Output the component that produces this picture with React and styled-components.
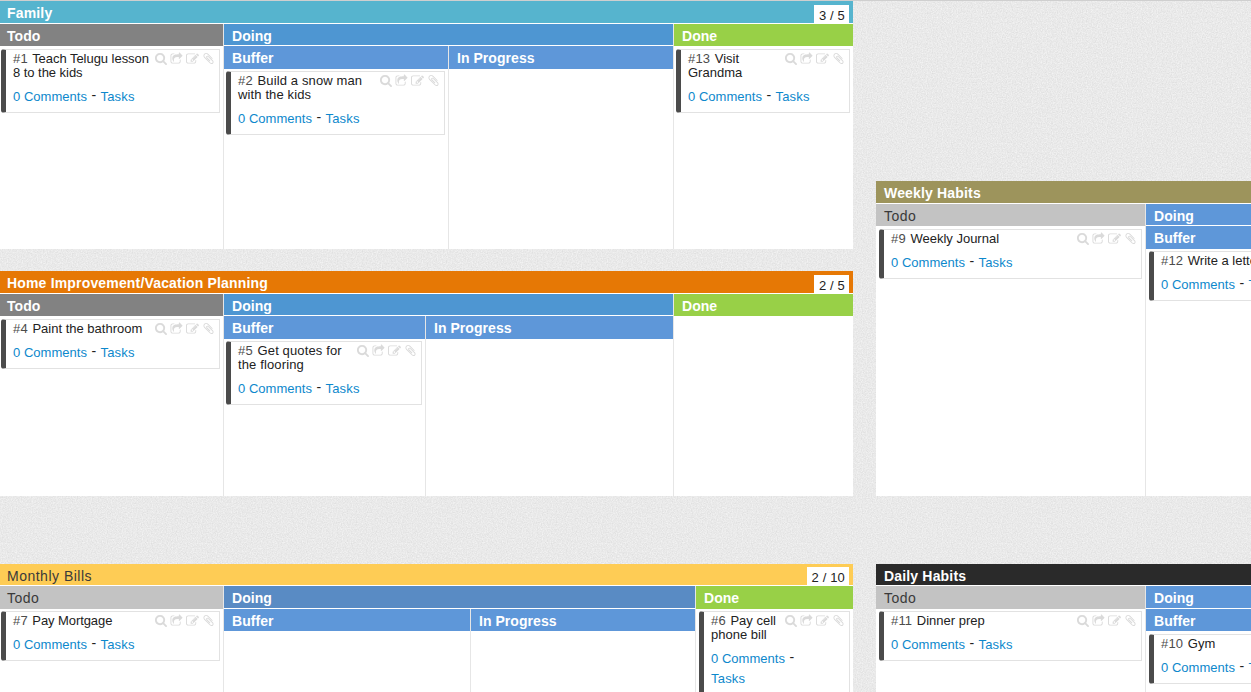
import React from "react";
import styled, { createGlobalStyle } from "styled-components";

const grain = encodeURIComponent(
  `<svg xmlns="http://www.w3.org/2000/svg" width="200" height="200"><filter id="n" x="0" y="0" width="100%" height="100%" color-interpolation-filters="sRGB"><feTurbulence type="fractalNoise" baseFrequency="0.8" numOctaves="2" seed="4" stitchTiles="stitch"/><feColorMatrix values="0.12 0 0 0 0.855  0.12 0 0 0 0.855  0.12 0 0 0 0.855  0 0 0 0 1"/></filter><rect width="200" height="200" filter="url(#n)"/></svg>`
);

const GlobalStyle = createGlobalStyle`
  *, *::before, *::after { box-sizing: border-box; }
  html, body { margin: 0; padding: 0; }
  body {
    overflow: hidden;
    font-family: "Liberation Sans", Arial, sans-serif;
    font-size: 13px;
    color: #222;
    background: #e9e9e9;
  }
`;

const Board = styled.main`
  display: flex;
  gap: 23px;
  width: 100vw;
  height: 692px;
  overflow: hidden;
  border-top: 1px solid #cfcfcf;
  background: #e9e9e9 url("data:image/svg+xml,${grain}");
`;

const Stack = styled.div`
  flex: none;
  display: flex;
  flex-direction: column;
  width: ${(p) => p.$width}px;
  padding-top: ${(p) => p.$offset || 0}px;
`;

const LaneBox = styled.section`
  flex: none;
  display: flex;
  flex-direction: column;
  height: ${(p) => p.$height}px;
  margin-bottom: ${(p) => p.$gap || 0}px;
  background: #fff;
`;

const LaneHeader = styled.header`
  flex: none;
  display: flex;
  justify-content: space-between;
  align-items: flex-start;
  height: ${(p) => p.$height}px;
  padding: 2px 4px 0 ${(p) => p.$indent}px;
  background: ${(p) => p.$bg};
`;

const Heading = styled.h2`
  margin: 0;
  font-size: 14px;
  line-height: 21px;
  font-weight: ${(p) => (p.$plain ? 400 : 700)};
  letter-spacing: ${(p) => (p.$plain ? 0.5 : 0.05)}px;
  color: ${(p) => (p.$plain ? "#3a3a3a" : "#fff")};
  white-space: nowrap;
`;

const LaneName = styled(Heading)`
  letter-spacing: ${(p) => (p.$plain ? 0.5 : 0.17)}px;
`;

const Count = styled.span`
  align-self: flex-end;
  height: 18px;
  padding: 0 4px 0 5px;
  font-size: 13px;
  line-height: 21px;
  letter-spacing: 0.15px;
  color: #222;
  background: #fff;
`;

const Columns = styled.div`
  flex: 1;
  display: flex;
  min-height: 0;
  padding-top: ${(p) => p.$top || 0}px;
`;

const ColumnBox = styled.div`
  display: flex;
  flex-direction: column;
  flex: ${(p) => (p.$width ? `0 0 ${p.$width}px` : "1")};
  min-width: 0;
  border-right: ${(p) => (p.$last ? "0" : "1px solid #e6e6e6")};
`;

const ColumnHeader = styled.div`
  flex: none;
  height: ${(p) => p.$height}px;
  padding: 2px 0 0 ${(p) => p.$indent}px;
  background: ${(p) => p.$bg};
  overflow: hidden;
`;

const CardBox = styled.article`
  flex: none;
  margin: ${(p) => p.$top}px 3px 0 ${(p) => p.$left}px;
  padding: 2px 4px 5px 7px;
  border: 1px solid #e2e2e2;
  border-left: 5px solid #4b4b4b;
  border-radius: 3px 0 0 3px;
  background: #fff;
`;

const CardTop = styled.div`
  display: flex;
  justify-content: space-between;
`;

const Title = styled.div`
  font-size: 13px;
  line-height: 14px;
  letter-spacing: ${(p) => p.$tracking}px;
  white-space: pre;
`;

const Num = styled.span`
  margin-right: 1px;
  letter-spacing: 0.15px;
  color: #4c4c4c;
`;

const Links = styled.div`
  margin-top: 7px;
  line-height: 20px;
  white-space: pre;
`;

const Link = styled.a`
  letter-spacing: ${(p) => p.$tracking || 0.03}px;
  color: #0d88cc;
`;

const Dash = styled.span`
  font-size: 14px;
  line-height: 0;
  vertical-align: 1px;
  word-spacing: 0.5px;
`;

const Tools = styled.div`
  flex: none;
  display: flex;
  gap: 3px;
  height: 14px;
`;

const Glyph = styled.svg`
  width: 13px;
  height: 13px;
  fill: #dadada;
`;

const paths = {
  search:
    "M1216 832q0-185-131.5-316.5t-316.5-131.5-316.5 131.5-131.5 316.5 131.5 316.5 316.5 131.5 316.5-131.5 131.5-316.5zm512 832q0 52-38 90t-90 38q-54 0-90-38l-343-342q-179 124-399 124-143 0-273.5-55.5t-225-150-150-225-55.5-273.5 55.5-273.5 150-225 225-150 273.5-55.5 273.5 55.5 225 150 150 225 55.5 273.5q0 220-124 399l343 343q37 37 37 90z",
  share:
    "M1472 989v259q0 119-84.5 203.5t-203.5 84.5h-832q-119 0-203.5-84.5t-84.5-203.5v-832q0-119 84.5-203.5t203.5-84.5h255q13 0 22.5 9.5t9.5 22.5q0 27-26 32-77 26-133 60-10 4-16 4h-112q-66 0-113 47t-47 113v832q0 66 47 113t113 47h832q66 0 113-47t47-113v-214q0-19 18-29 28-13 54-37 16-16 35-8 21 9 21 29zm237-496l-384 384q-18 19-45 19-12 0-25-5-39-17-39-59v-192h-160q-323 0-438 131-119 137-74 473 3 23-20 34-8 2-12 2-16 0-26-13-10-14-21-31t-39.5-68.5-49.5-99.5-38.5-114-17.5-122q0-49 3.5-91t14-90 28-88 47-81.5 68.5-74 94.5-61.5 124.5-48.5 159.5-30.5 196.5-11h160v-192q0-42 39-59 13-5 25-5 26 0 45 19l384 384q19 19 19 45t-19 45z",
  edit:
    "M888 1184l116-116-152-152-116 116v56h96v96h56zm440-720q-16-16-33 1l-350 350q-17 17-1 33t33-1l350-350q17-17 1-33zm80 594v190q0 119-84.5 203.5t-203.5 84.5h-832q-119 0-203.5-84.5t-84.5-203.5v-832q0-119 84.5-203.5t203.5-84.5h832q63 0 117 25 15 7 18 23 3 17-9 29l-49 49q-14 14-32 8-23-6-45-6h-832q-66 0-113 47t-47 113v832q0 66 47 113t113 47h832q66 0 113-47t47-113v-126q0-13 9-22l64-64q15-15 35-7t20 29zm-96-738l288 288-672 672h-288v-288zm444 132l-92 92-288-288 92-92q28-28 68-28t68 28l152 152q28 28 28 68t-28 68z",
  clip:
    "M1596 1385q0 117-79 196t-196 79q-135 0-235-100l-777-776q-113-115-113-271 0-159 110-270t269-111q158 0 273 113l605 606q10 10 10 22 0 16-30.5 46.5t-46.5 30.5q-13 0-23-10l-606-607q-79-77-181-77-106 0-179 75t-73 181q0 105 76 181l776 777q63 63 145 63 64 0 106-42t42-106q0-82-63-145l-581-581q-26-24-60-24-29 0-48 19t-19 48q0 32 25 59l410 410q10 10 10 22 0 16-31 47t-47 31q-12 0-22-10l-410-410q-63-61-63-149 0-82 57-139t139-57q88 0 149 63l581 581q100 98 100 235z",
};

const views = {
  search: "-64 0 1792 1792",
  share: "0 -64 1792 1792",
  edit: "0 -64 1792 1792",
  clip: "0 0 1792 1792",
};

const Card = ({ id, title, top = 3, left = 2, stacked, tracking = 0.13 }) => (
  <CardBox $top={top} $left={left}>
    <CardTop>
      <Title $tracking={tracking}>
        <Num>#{id}</Num> {title}
      </Title>
      <Tools>
        {Object.keys(paths).map((name) => (
          <Glyph key={name} viewBox={views[name]} aria-label={name}>
            <path d={paths[name]} />
          </Glyph>
        ))}
      </Tools>
    </CardTop>
    <Links>
      <Link>0 Comments</Link>
      <Dash>{stacked ? " -\n" : " - "}</Dash>
      <Link $tracking={0.2}>Tasks</Link>
    </Links>
  </CardBox>
);

const Column = ({ name, bg, width, height = 22, indent = 8, plain, last, children }) => (
  <ColumnBox $width={width} $last={last}>
    <ColumnHeader $bg={bg} $height={height} $indent={indent}>
      <Heading as="h3" $plain={plain}>{name}</Heading>
    </ColumnHeader>
    {children}
  </ColumnBox>
);

const Lane = ({ name, bg, height, gap, count, plain, headerHeight = 22, indent = 7, children }) => (
  <LaneBox $height={height} $gap={gap}>
    <LaneHeader $bg={bg} $height={headerHeight} $indent={indent}>
      <LaneName $plain={plain}>{name}</LaneName>
      {count && <Count>{count}</Count>}
    </LaneHeader>
    <Columns $top={1}>{children}</Columns>
  </LaneBox>
);

const GRAY = "#828282";
const SILVER = "#c3c3c3";
const BLUE = "#4e96d2";
const SKY = "#5e97d9";
const GREEN = "#98d047";

export default function App() {
  return (
    <>
      <GlobalStyle />
      <Board>
        <Stack $width={853}>
          <Lane name="Family" bg="#56b4ce" height={248} gap={22} count="3 / 5">
            <Column name="Todo" bg={GRAY} width={224} indent={7}>
              <Card id={1} title={"Teach Telugu lesson\n8 to the kids"} left={1} tracking={-0.04} />
            </Column>
            <Column name="Doing" bg={BLUE} width={450} height={21}>
              <Columns $top={1}>
                <Column name="Buffer" bg={SKY} width={225} height={23}>
                  <Card id={2} title={"Build a snow man\nwith the kids"} top={2} />
                </Column>
                <Column name="In Progress" bg={SKY} height={23} last />
              </Columns>
            </Column>
            <Column name="Done" bg={GREEN} last>
              <Card id={13} title={"Visit\nGrandma"} tracking={0} />
            </Column>
          </Lane>

          <Lane name="Home Improvement/Vacation Planning" bg="#e67805" height={225} gap={68} count="2 / 5">
            <Column name="Todo" bg={GRAY} width={224} indent={7}>
              <Card id={4} title="Paint the bathroom" left={1} tracking={0} />
            </Column>
            <Column name="Doing" bg={BLUE} width={450} height={21}>
              <Columns $top={1}>
                <Column name="Buffer" bg={SKY} width={202} height={23}>
                  <Card id={5} title={"Get quotes for\nthe flooring"} top={2} />
                </Column>
                <Column name="In Progress" bg={SKY} height={23} last />
              </Columns>
            </Column>
            <Column name="Done" bg={GREEN} last />
          </Lane>

          <Lane name="Monthly Bills" bg="#fecc55" height={248} count="2 / 10" plain headerHeight={21}>
            <Column name="Todo" bg={SILVER} width={224} height={23} indent={7} plain>
              <Card id={7} title="Pay Mortgage" top={2} left={1} tracking={-0.08} />
            </Column>
            <Column name="Doing" bg="#598bc4" width={472} height={22}>
              <Columns $top={1}>
                <Column name="Buffer" bg={SKY} width={247} />
                <Column name="In Progress" bg={SKY} last />
              </Columns>
            </Column>
            <Column name="Done" bg={GREEN} height={23} last>
              <Card id={6} title={"Pay cell\nphone bill"} top={2} left={3} stacked tracking={0} />
            </Column>
          </Lane>
        </Stack>

        <Stack $width={853} $offset={180}>
          <Lane name="Weekly Habits" bg="#9d945c" height={315} gap={68} indent={8}>
            <Column name="Todo" bg={SILVER} width={270} plain>
              <Card id={9} title="Weekly Journal" left={3} tracking={0} />
            </Column>
            <Column name="Doing" bg={SKY} width={450} height={21}>
              <Columns $top={1}>
                <Column name="Buffer" bg={SKY} width={270} height={23}>
                  <Card id={12} title="Write a letter" top={2} left={3} tracking={0} />
                </Column>
              </Columns>
            </Column>
          </Lane>

          <Lane name="Daily Habits" bg="#2a2a2a" height={248} headerHeight={21} indent={8}>
            <Column name="Todo" bg={SILVER} width={270} height={23} plain>
              <Card id={11} title="Dinner prep" top={2} left={3} tracking={0} />
            </Column>
            <Column name="Doing" bg={SKY} width={450} height={22}>
              <Columns $top={1}>
                <Column name="Buffer" bg={SKY} width={270}>
                  <Card id={10} title="Gym" left={3} tracking={0} />
                </Column>
              </Columns>
            </Column>
          </Lane>
        </Stack>
      </Board>
    </>
  );
}
